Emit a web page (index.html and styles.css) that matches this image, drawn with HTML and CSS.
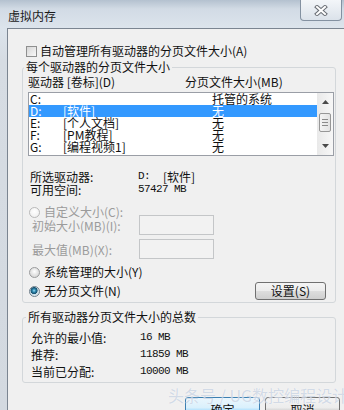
FILE: index.html
```html
<!DOCTYPE html>
<html lang="zh-CN">
<head>
<meta charset="UTF-8">
<meta name="viewport" content="width=device-width, initial-scale=1.0">
<title>虚拟内存</title>
<link rel="stylesheet" href="styles.css">
</head>
<body>
    <div class="window">
        <div class="titlebar">
            <span class="title">虚拟内存</span>
            <span class="close-btn">
                <svg width="14" height="11" viewBox="0 0 14 11">
                    <path d="M3 2 L11 9 M11 2 L3 9" stroke="#6a6f76" stroke-width="4" stroke-linecap="square"/>
                    <path d="M3 2 L11 9 M11 2 L3 9" stroke="#ffffff" stroke-width="2" stroke-linecap="square"/>
                </svg>
            </span>
        </div>
        <div class="client">
            <div class="check-line"><span class="checkbox"></span>自动管理所有驱动器的分页文件大小(A)</div>

            <fieldset class="group group-drive">
                <legend>每个驱动器的分页文件大小</legend>
                <div class="group-body">
                    <div class="list-head">
                        <span class="head-drive">驱动器 [卷标](D)</span>
                        <span>分页文件大小(MB)</span>
                    </div>
                    <div class="listbox">
                        <div class="rows">
                            <div class="row"><span class="c-letter">C:</span><span class="c-label"></span><span>托管的系统</span></div>
                            <div class="row selected"><span class="c-letter">D:</span><span class="c-label">[软件]</span><span>无</span></div>
                            <div class="row"><span class="c-letter">E:</span><span class="c-label">[个人文档]</span><span>无</span></div>
                            <div class="row"><span class="c-letter">F:</span><span class="c-label">[PM教程]</span><span>无</span></div>
                            <div class="row"><span class="c-letter">G:</span><span class="c-label">[编程视频1]</span><span>无</span></div>
                        </div>
                        <div class="scrollbar">
                            <div class="sb-btn">
                                <svg width="7" height="4" viewBox="0 0 7 4"><path d="M0 4 L3.5 0 L7 4 Z" fill="#4a4a4a"/></svg>
                            </div>
                            <div class="sb-track">
                                <div class="sb-thumb"><span></span><span></span><span></span></div>
                            </div>
                            <div class="sb-btn">
                                <svg width="7" height="4" viewBox="0 0 7 4"><path d="M0 0 L7 0 L3.5 4 Z" fill="#4a4a4a"/></svg>
                            </div>
                        </div>
                    </div>

                    <div class="info">
                        <div class="info-row"><span class="info-key">所选驱动器:</span><span class="mono">D:</span><span class="vol">[软件]</span></div>
                        <div class="info-row"><span class="info-key">可用空间:</span><span class="mono">57427 MB</span></div>
                    </div>

                    <div class="radio-line custom disabled"><span class="radio"></span>自定义大小(C):</div>
                    <div class="size-row first"><span class="size-key">初始大小(MB)(I):</span><span class="size-box"></span></div>
                    <div class="size-row second"><span class="size-key">最大值(MB)(X):</span><span class="size-box"></span></div>
                    <div class="radio-line system"><span class="radio"></span>系统管理的大小(Y)</div>
                    <div class="radio-line nofile">
                        <span class="radio checked"></span>无分页文件(N)
                        <button class="btn set-btn">设置(S)</button>
                    </div>
                </div>
            </fieldset>

            <fieldset class="group group-total">
                <legend>所有驱动器分页文件大小的总数</legend>
                <div class="group-body">
                    <div class="total-row"><span class="total-key">允许的最小值:</span><span class="mono">16 MB</span></div>
                    <div class="total-row"><span class="total-key">推荐:</span><span class="mono">11859 MB</span></div>
                    <div class="total-row"><span class="total-key">当前已分配:</span><span class="mono">10000 MB</span></div>
                </div>
            </fieldset>

            <div class="actions">
                <button class="btn btn-default">确定</button>
                <button class="btn">取消</button>
            </div>
        </div>
        <div class="watermark">头条号 / UG数控编程设计</div>
    </div>
</body>
</html>
```

FILE: styles.css
```css
html, body{
    margin: 0;
    padding: 0;
}
body{
    font-family: "Noto Sans CJK SC", sans-serif;
    font-size: 12px;
    color: #111;
}

.window{
    position: relative;
    width: 344px;
    height: 410px;
    overflow: hidden;
    display: flex;
    flex-direction: column;
    background: linear-gradient(180deg, #b4c1cf 0, #d2dbe5 9px, #dce4ec 28px, #d6dce3 60px, #d3d9e0 100%);
}

/* title bar */
.titlebar{
    height: 28px;
    display: flex;
    align-items: flex-start;
    flex-shrink: 0;
}
.title{
    padding: 10px 0 0 8px;
    line-height: 12px;
    color: #1a1a1a;
}
.close-btn{
    margin-left: auto;
    margin-right: 2px;
    width: 42px;
    height: 21px;
    box-sizing: border-box;
    border: 1px solid #8391a1;
    border-top: none;
    border-radius: 0 0 4px 4px;
    background: linear-gradient(180deg, #f3f6f9, #dbe2ea);
    display: flex;
    align-items: center;
    justify-content: center;
}

/* client area */
.client{
    flex: 1;
    margin-left: 7px;
    border-left: 1px solid #7b8591;
    border-top: 1px solid #7b8591;
    background: #f0f0f0;
}

.check-line{
    margin-top: 15px;
    padding-left: 18px;
    height: 14px;
    line-height: 14px;
    display: flex;
    align-items: center;
}
.checkbox{
    width: 11px;
    height: 11px;
    box-sizing: border-box;
    border: 1px solid #8e8f8f;
    background: linear-gradient(135deg, #d6d6d6, #f8f8f8);
    margin-right: 3px;
}

/* group boxes */
.group{
    margin: 0 0 0 14px;
    padding: 0;
    width: 314px;
    box-sizing: border-box;
    min-width: 0;
    border: 1px solid #d3d7da;
    border-radius: 3px;
}
.group legend{
    padding: 0 2px;
    margin-left: 1px;
    line-height: 14px;
    font-size: 12px;
}
.group-drive{
    margin-top: 2px;
}
.group-drive .group-body{
    padding: 1px 0 2px 5px;
}
.group-total{
    margin-top: 7px;
}
.group-total legend{
    margin-left: 3px;
}
.group-total .group-body{
    padding: 5px 0 2px 5px;
}

.list-head{
    display: flex;
    line-height: 14px;
    height: 14px;
}
.head-drive{
    width: 157px;
}

/* drive list */
.listbox{
    margin-top: 3px;
    width: 306px;
    height: 64px;
    box-sizing: border-box;
    border: 1px solid #9a9ea6;
    display: flex;
    background: #fff;
}
.rows{
    flex: 1;
}
.row{
    display: flex;
    height: 12px;
    line-height: 12px;
    padding-left: 1px;
    white-space: nowrap;
}
.row.selected{
    background: #3399ff;
    color: #fff;
}
.c-letter{
    width: 33px;
}
.c-label{
    width: 149px;
}

.scrollbar{
    width: 16px;
    display: flex;
    flex-direction: column;
    background: linear-gradient(90deg, #e9e9e9, #f7f7f7);
}
.sb-btn{
    height: 18px;
    display: flex;
    align-items: center;
    justify-content: center;
}
.sb-track{
    flex: 1;
}
.sb-thumb{
    margin: 2px 2px 0 2px;
    height: 19px;
    box-sizing: border-box;
    border: 1px solid #979797;
    border-radius: 2px;
    background: linear-gradient(90deg, #f4f4f4, #e3e3e3);
    display: flex;
    flex-direction: column;
    align-items: center;
    justify-content: center;
    gap: 2px;
}
.sb-thumb span{
    width: 6px;
    height: 1px;
    background: #8a8a8a;
}

/* selected drive info */
.info{
    margin-top: 14px;
}
.info-row{
    display: flex;
    height: 13px;
    line-height: 13px;
    padding-left: 2px;
}
.info-key{
    width: 108px;
}
.vol{
    margin-left: 13px;
}
.mono{
    font-family: "Liberation Mono", monospace;
    font-size: 11px;
    letter-spacing: -0.6px;
}

/* radios and size boxes */
.radio-line{
    display: flex;
    align-items: center;
    height: 14px;
    line-height: 14px;
    padding-left: 1px;
}
.radio{
    width: 11px;
    height: 11px;
    box-sizing: border-box;
    border: 1px solid #9a9b9c;
    border-radius: 50%;
    background: radial-gradient(circle at 50% 40%, #ffffff 0, #e6e6e6 45%, #cfcfcf 100%);
    margin-right: 4px;
}
.radio.checked{
    border-color: #6f7f8b;
    background: radial-gradient(circle at 45% 40%, #9fe0f4 0, #2c86ad 1.6px, #17506e 3.2px, #c9dde6 3.8px, #f4f4f4 100%);
}
.disabled{
    color: #9b9b9b;
}
.radio-line.custom{
    margin-top: 9px;
}
.disabled .radio{
    border-color: #b9b9b9;
    background: radial-gradient(circle at 50% 40%, #ffffff 0, #ececec 100%);
}
.radio-line.system{
    margin-top: 6px;
}
.radio-line.nofile{
    margin-top: 3px;
    height: 18px;
}

.size-row{
    display: flex;
    align-items: center;
    height: 20px;
    padding-left: 4px;
    color: #9b9b9b;
}
.size-row.first{
    margin-top: -4px;
}
.size-row.second{
    margin-top: 4px;
}
.size-key{
    width: 107px;
}
.size-box{
    width: 75px;
    height: 20px;
    box-sizing: border-box;
    border: 1px solid #c4c6c8;
    background: #f2f2f2;
}

/* buttons */
.btn{
    font-family: "Noto Sans CJK SC", sans-serif;
    font-size: 12px;
    color: #111;
    padding: 0;
    box-sizing: border-box;
    border: 1px solid #707070;
    border-radius: 3px;
    background: linear-gradient(180deg, #f4f4f4 0, #ececec 48%, #dddddd 52%, #cfcfcf 100%);
    line-height: 14px;
}
.set-btn{
    margin-left: auto;
    margin-right: 9px;
    width: 71px;
    height: 18px;
}

.total-row{
    display: flex;
    height: 17px;
    line-height: 17px;
    padding-left: 3px;
}
.total-key{
    width: 109px;
}

.actions{
    margin-top: 14px;
    display: flex;
    justify-content: flex-end;
    gap: 5px;
    padding-right: 4px;
}
.actions .btn{
    width: 75px;
    height: 23px;
    padding-top: 3px;
}
.actions .btn-default{
    border-color: #3c7fb1;
    background: linear-gradient(180deg, #eaf6fd 0, #d9f0fc 48%, #bee6fd 52%, #a7d9f5 100%);
}

/* watermark over the dialog */
.watermark{
    position: absolute;
    left: 168px;
    top: 386px;
    font-size: 16px;
    line-height: 18px;
    color: rgba(150, 170, 200, 0.42);
    text-shadow: 0 0 1px rgba(255, 255, 255, 0.9);
    white-space: nowrap;
}
```
